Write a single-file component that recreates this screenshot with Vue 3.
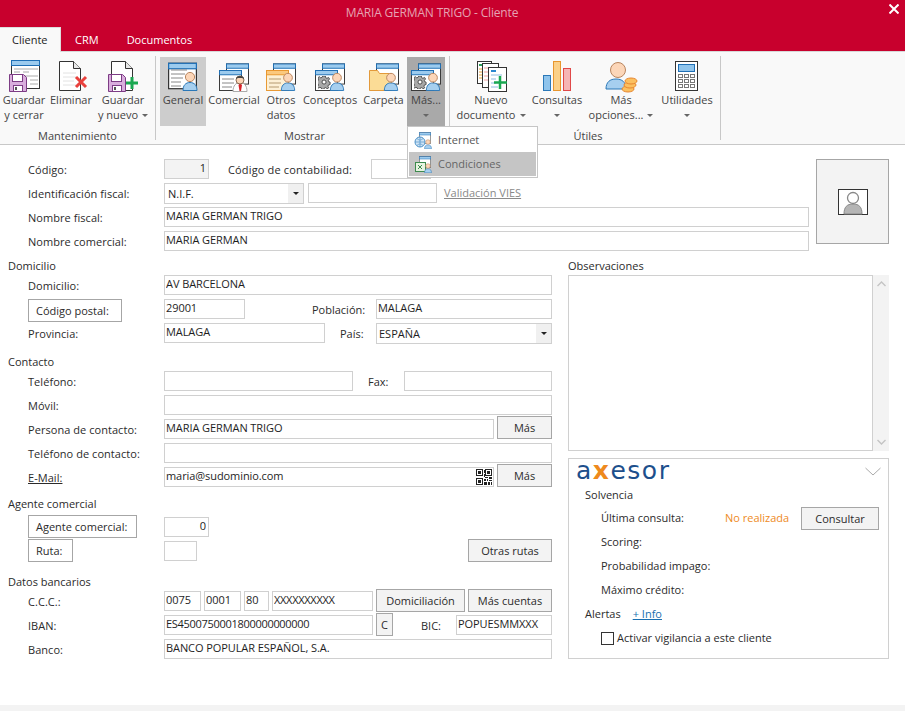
<template>
  <div class="win">
    <svg class="defs" width="0" height="0">
      <defs>
        <symbol id="person" viewBox="0 0 16 20">
          <path d="M1 19.500c0-5 2.500-8 7-8s7 3 7 8z" fill="#a6cfef" stroke="#2b78b8" />
          <circle cx="8" cy="6" r="4.600" fill="#fcd6b8" stroke="#b9855e" />
        </symbol>
        <symbol id="gear" viewBox="0 0 14 14">
          <path d="M5.500 0h3l.4 2 1.500.7 1.800-1.100 1.200 1.900-1.400 1.400.3 1.600 1.700.6v2.800l-1.900.5-.6 1.500 1 1.700-2 1.200-1.400-1.400-1.600.3-.6 1.700h-2.600l-.6-1.800-1.500-.5-1.700 1-1.300-2 1.300-1.300-.4-1.700-1.800-.5v-2.800l1.900-.5.5-1.600-1-1.700 2-1.200 1.400 1.300 1.500-.4z" fill="#a8a8a8" stroke="#444" transform="scale(.93)" />
          <circle cx="6.500" cy="6.500" r="2.200" fill="#fff" stroke="#444" />
        </symbol>
        <symbol id="floppy" viewBox="0 0 18 18">
          <path d="M.5.500h14l3 3v14h-17z" fill="#d9aedd" stroke="#7d3d85" />
          <rect x="3.500" y=".5" width="10" height="7" fill="#fff" stroke="#7d3d85" />
          <rect x="4.500" y="11.500" width="9" height="6" fill="#fff" stroke="#7d3d85" />
          <rect x="6" y="13" width="2" height="3" fill="#555" />
        </symbol>
        <symbol id="doc" viewBox="0 0 22 30">
          <path d="M.5.500h14l7 7v22h-21z" fill="#fff" stroke="#333" />
          <path d="M14.500.500v7h7" fill="#e8e8e8" stroke="#333" />
        </symbol>
        <symbol id="win" viewBox="0 0 24 22">
          <rect x=".5" y=".5" width="23" height="21" fill="#fff" stroke="#333" />
          <rect x=".5" y=".5" width="23" height="4.500" fill="#9ccbee" stroke="#1f6fb5" />
        </symbol>
        <symbol id="winOrange" viewBox="0 0 24 22">
          <rect x=".5" y=".5" width="23" height="21" fill="#fdf0d5" stroke="#e8962e" />
          <rect x=".5" y=".5" width="23" height="4.500" fill="#fbc97e" stroke="#e8962e" />
        </symbol>

        <symbol id="i-guardar" viewBox="0 0 36 36">
          <rect x="5.500" y="2.500" width="28" height="28" fill="#fff" stroke="#333" />
          <rect x="5.500" y="2.500" width="28" height="5" fill="#9ccbee" stroke="#1f6fb5" />
          <path d="M8 11h24M8 14h6M17 14h6M8 18h24M24 22h8M24 26h8" stroke="#aaa" fill="none" />
          <use href="#floppy" x="3" y="16" width="18" height="18" />
        </symbol>
        <symbol id="i-eliminar" viewBox="0 0 36 36">
          <use href="#doc" x="6" y="3" width="22" height="30" />
          <path d="M10 15h13M10 19h13M10 23h11M10 27h13" stroke="#e2e2e2" fill="none" />
          <path d="M23 19l10 10M33 19l-10 10" stroke="#e8403c" stroke-width="3" fill="none" />
        </symbol>
        <symbol id="i-nuevo" viewBox="0 0 36 36">
          <use href="#doc" x="6" y="3" width="22" height="30" />
          <use href="#floppy" x="3" y="16" width="18" height="18" />
          <path d="M27 19v12M21 25h12" stroke="#1aa851" stroke-width="3" fill="none" />
        </symbol>
        <symbol id="i-general" viewBox="0 0 36 36">
          <use href="#win" x="3" y="4" width="29" height="28" />
          <path d="M6 12h16M6 16h14M6 20h12M6 24h10M6 28h10" stroke="#888" fill="none" />
          <use href="#person" x="17" y="13" width="16" height="20" />
        </symbol>
        <symbol id="i-comercial" viewBox="0 0 36 36">
          <use href="#win" x="10" y="3" width="23" height="26" />
          <use href="#win" x="3" y="12" width="23" height="21" />
          <path d="M6 21h12M6 25h12M6 29h10" stroke="#888" fill="none" />
          <path d="M17 33.500c0-6 3-9 7-9s7 3 7 9z" fill="#fff" stroke="#aaa" />
          <path d="M24 25l-1.500 2 1 6h1.500l1-6z" fill="#d8232a" />
          <circle cx="24" cy="22" r="4" fill="#fcd6b8" stroke="#8a6a50" />
          <path d="M20 21c0-4 8-4 8 0l-2-1h-4z" fill="#444" />
        </symbol>
        <symbol id="i-otros" viewBox="0 0 36 36">
          <use href="#win" x="10" y="3" width="23" height="26" />
          <use href="#winOrange" x="3" y="12" width="23" height="21" />
          <path d="M6 21h12M6 25h12M6 29h10" stroke="#b59a70" fill="none" />
          <use href="#person" x="17" y="14" width="16" height="19" />
        </symbol>
        <symbol id="i-conceptos" viewBox="0 0 36 36">
          <use href="#win" x="10" y="3" width="23" height="26" />
          <use href="#win" x="3" y="12" width="23" height="21" />
          <use href="#gear" x="6" y="18" width="13" height="13" />
          <use href="#person" x="17" y="14" width="16" height="19" />
        </symbol>
        <symbol id="i-carpeta" viewBox="0 0 36 36">
          <use href="#win" x="10" y="3" width="23" height="26" />
          <path d="M3.500 32.500v-20h8l2 3h12v17z" fill="#fbdc96" stroke="#e39a3b" />
          <use href="#person" x="17" y="14" width="16" height="19" />
        </symbol>
        <symbol id="i-documento" viewBox="0 0 36 36">
          <rect x="4.500" y="3.500" width="14" height="22" fill="#fff" stroke="#333" />
          <path d="M6 7h9" stroke="#2a9d5a" stroke-width="2" />
          <path d="M6 11h10M6 14h10M6 17h10M6 20h10" stroke="#e8a33a" />
          <rect x="9.500" y="5.500" width="16" height="24" fill="#fff" stroke="#333" />
          <path d="M11 10h10M11 14h12M11 18h12M11 22h12" stroke="#f0a0a0" />
          <rect x="15.500" y="9.500" width="18" height="24" fill="#fff" stroke="#333" />
          <path d="M18 13h5" stroke="#2b88d0" stroke-width="2" />
          <path d="M18 17h11M18 21h5M18 25h5M18 29h7" stroke="#8fbce0" />
          <path d="M27 18v13M21 24.500h13" stroke="#1aa851" stroke-width="2.500" fill="none" />
        </symbol>
        <symbol id="i-consultas" viewBox="0 0 36 36">
          <rect x="4.500" y="17.500" width="7" height="15" fill="#8fc4ec" stroke="#2b78b8" />
          <rect x="14.500" y="3.500" width="7" height="29" fill="#fbd088" stroke="#e8962e" />
          <rect x="24.500" y="10.500" width="7" height="22" fill="#f5b5b5" stroke="#e04848" />
        </symbol>
        <symbol id="i-opciones" viewBox="0 0 36 36">
          <path d="M3 31c0-7 4-10 10-10s10 3 10 10z" fill="#a6cfef" stroke="#2b78b8" />
          <circle cx="15" cy="12" r="7.500" fill="#fcd6b8" stroke="#b9855e" />
          <g fill="#fbc060" stroke="#e8862e">
            <ellipse cx="25" cy="31" rx="6" ry="3" />
            <ellipse cx="27" cy="27" rx="6" ry="3" />
            <ellipse cx="28" cy="23" rx="6" ry="3" />
          </g>
        </symbol>
        <symbol id="i-utilidades" viewBox="0 0 36 36">
          <rect x="6.500" y="3.500" width="22" height="29" fill="#fff" stroke="#333" />
          <rect x="9.500" y="6.500" width="16" height="7" fill="#8fc4ec" stroke="#1f6fb5" />
          <g fill="none" stroke="#777">
            <rect x="9.500" y="16.500" width="4" height="3" /><rect x="15.500" y="16.500" width="4" height="3" /><rect x="21.500" y="16.500" width="4" height="3" />
            <rect x="9.500" y="21.500" width="4" height="3" /><rect x="15.500" y="21.500" width="4" height="3" /><rect x="21.500" y="21.500" width="4" height="3" />
            <rect x="9.500" y="26.500" width="4" height="3" /><rect x="15.500" y="26.500" width="4" height="3" /><rect x="21.500" y="26.500" width="4" height="3" />
          </g>
        </symbol>
      </defs>
    </svg>

    <header class="titlebar">
      <span class="title">MARIA GERMAN TRIGO - Cliente</span>
      <svg class="close" width="10" height="10" viewBox="0 0 10 10">
        <path d="M.5.500l9 9M9.500.500l-9 9" stroke="#fff" stroke-width="2" />
      </svg>
    </header>

    <nav class="tabs">
      <span class="tab tab-on">Cliente</span>
      <span class="tab tab-crm">CRM</span>
      <span class="tab">Documentos</span>
    </nav>

    <section class="ribbon">
      <div v-for="g in groups" :key="g.name" class="group" :class="g.cls">
        <div class="group-btns">
          <div
            v-for="b in g.items"
            :key="b.icon + b.lines[0]"
            class="rbtn"
            :class="b.state"
            :style="{ width: b.w + 'px' }"
          >
            <svg class="ricon" width="36" height="36"><use :href="'#' + b.icon" /></svg>
            <span class="rline">{{ b.lines[0] }}</span>
            <span class="rline">
              {{ b.lines[1] }}<i v-if="b.arrow" class="caret" :class="{ solo: !b.lines[1] }"></i>
            </span>
          </div>
        </div>
        <div class="group-name">{{ g.name }}</div>
      </div>
    </section>

    <div class="menu">
      <div class="menu-item">
        <svg width="18" height="18" viewBox="0 0 18 18">
          <use href="#win" x="5" y="1" width="12" height="12" />
          <circle cx="6" cy="11" r="5" fill="#cfe4f5" stroke="#4f93c9" />
          <path d="M1 11h10M6 6v10M3 7.500c2 2 4 2 6 0M3 14.500c2-2 4-2 6 0" stroke="#4f93c9" fill="none" stroke-width=".7" />
          <use href="#person" x="10" y="8" width="8" height="10" />
        </svg>
        <span>Internet</span>
      </div>
      <div class="menu-item menu-on">
        <svg width="18" height="18" viewBox="0 0 18 18">
          <use href="#win" x="5" y="1" width="12" height="12" />
          <rect x="1.500" y="7.500" width="10" height="9" fill="#e6f3e0" stroke="#3d8a4e" />
          <path d="M4 10l4 4M8 10l-4 4" stroke="#3d8a4e" />
          <use href="#person" x="10" y="8" width="8" height="10" />
        </svg>
        <span>Condiciones</span>
      </div>
    </div>

    <main class="body">
      <div class="top">
        <div class="top-rows">
          <div class="row">
            <label class="lab">Código:</label>
            <input class="f f-num f-off w45" value="1" readonly />
            <label class="lab-inline cont">Código de contabilidad:</label>
            <input class="f w60 cont-in" readonly />
          </div>
          <div class="row">
            <label class="lab">Identificación fiscal:</label>
            <div class="combo w140 pad4"><span>N.I.F.</span><i class="combo-btn"><b class="caret dark"></b></i></div>
            <input class="f w129 ml4" readonly />
            <a class="vies">Validación VIES</a>
          </div>
          <div class="row">
            <label class="lab">Nombre fiscal:</label>
            <input class="f grow" value="MARIA GERMAN TRIGO" readonly />
          </div>
          <div class="row">
            <label class="lab">Nombre comercial:</label>
            <input class="f grow" value="MARIA GERMAN" readonly />
          </div>
        </div>
        <div class="photo">
          <svg width="30" height="26" viewBox="0 0 30 26">
            <rect x=".5" y=".5" width="29" height="25" fill="#fff" stroke="#333" />
            <path d="M6 25c0-7 3-10 9-10s9 3 9 10z" fill="#b5b5b5" stroke="#888" />
            <circle cx="15" cy="9" r="5.500" fill="#fff" stroke="#888" stroke-width="1.300" />
          </svg>
        </div>
      </div>

      <div class="cols">
        <div class="left">
          <h3 class="head h-dom">Domicilio</h3>
          <div class="row">
            <label class="lab">Domicilio:</label>
            <input class="f grow" value="AV BARCELONA" readonly />
          </div>
          <div class="row">
            <button class="btn lab-btn b-postal">Código postal:</button>
            <input class="f w81" value="29001" readonly />
            <label class="lab-inline pob">Población:</label>
            <input class="f grow" value="MALAGA" readonly />
          </div>
          <div class="row">
            <label class="lab">Provincia:</label>
            <input class="f w161" value="MALAGA" readonly />
            <label class="lab-inline pais">País:</label>
            <div class="combo grow"><span>ESPAÑA</span><i class="combo-btn"><b class="caret dark"></b></i></div>
          </div>

          <h3 class="head h-con">Contacto</h3>
          <div class="row">
            <label class="lab">Teléfono:</label>
            <input class="f w189" readonly />
            <label class="lab-inline fax">Fax:</label>
            <input class="f grow" readonly />
          </div>
          <div class="row">
            <label class="lab">Móvil:</label>
            <input class="f grow" readonly />
          </div>
          <div class="row">
            <label class="lab">Persona de contacto:</label>
            <input class="f grow" value="MARIA GERMAN TRIGO" readonly />
            <button class="btn b-mas">Más</button>
          </div>
          <div class="row">
            <label class="lab">Teléfono de contacto:</label>
            <input class="f grow" readonly />
          </div>
          <div class="row">
            <label class="lab"><u>E-Mail:</u></label>
            <div class="mail grow">
              <input class="f grow" value="maria@sudominio.com" readonly />
              <svg class="qr" width="16" height="16" viewBox="0 0 16 16">
                <path fill="#222" fill-rule="evenodd" d="M0 0h7v7H0zM1 1v5h5V1zM2 2h3v3H2zM9 0h7v7H9zM10 1v5h5V1zM11 2h3v3h-3zM0 9h7v7H0zM1 10v5h5v-5zM2 11h3v3H2zM8 1h1v3H8zM8 5h1v3H8zM9 8h3v1H9zM13 8h3v2h-3zM8 10h2v2H8zM11 10h1v2h-1zM13 11h3v1h-3zM8 13h3v3H8zM12 13h2v3h-2zM15 13h1v3h-1z" />
              </svg>
            </div>
            <button class="btn b-mas">Más</button>
          </div>

          <h3 class="head h-age">Agente comercial</h3>
          <div class="row">
            <button class="btn lab-btn b-agente">Agente comercial:</button>
            <input class="f f-num w45" value="0" readonly />
          </div>
          <div class="row">
            <button class="btn lab-btn b-ruta">Ruta:</button>
            <input class="f w33" readonly />
            <button class="btn b-otras">Otras rutas</button>
          </div>

          <h3 class="head h-ban">Datos bancarios</h3>
          <div class="row">
            <label class="lab">C.C.C.:</label>
            <input class="f w37" value="0075" readonly />
            <input class="f w37 ml3" value="0001" readonly />
            <input class="f w25 ml3" value="80" readonly />
            <input class="f w101 ml3 tight" value="XXXXXXXXXX" readonly />
            <button class="btn b-dom">Domiciliación</button>
            <button class="btn b-cuentas">Más cuentas</button>
          </div>
          <div class="row">
            <label class="lab">IBAN:</label>
            <input class="f w209 tight" value="ES4500750001800000000000" readonly />
            <button class="btn b-c">C</button>
            <label class="lab-inline bic">BIC:</label>
            <input class="f grow" value="POPUESMMXXX" readonly />
          </div>
          <div class="row">
            <label class="lab">Banco:</label>
            <input class="f grow" value="BANCO POPULAR ESPAÑOL, S.A." readonly />
          </div>
        </div>

        <aside class="right">
          <h3 class="head h-dom">Observaciones</h3>
          <div class="obs">
            <div class="obs-text"></div>
            <div class="scroll">
              <svg width="9" height="6" viewBox="0 0 9 6"><path d="M.5 5l4-4 4 4" fill="none" stroke="#c4c4c4" stroke-width="1.400" /></svg>
              <svg width="9" height="6" viewBox="0 0 9 6"><path d="M.5 1l4 4 4-4" fill="none" stroke="#c4c4c4" stroke-width="1.400" /></svg>
            </div>
          </div>
          <div class="axe">
            <div class="axe-top">
              <span class="logo">a<em>x</em>esor</span>
              <svg class="axe-fold" width="16" height="9" viewBox="0 0 16 9"><path d="M.5 1l7.500 7 7.500-7" fill="none" stroke="#aaa" /></svg>
            </div>
            <div class="axe-head">Solvencia</div>
            <div class="axe-row">
              <span class="axe-lab">Última consulta:</span>
              <span class="warn">No realizada</span>
              <button class="btn b-consultar">Consultar</button>
            </div>
            <div class="axe-row"><span class="axe-lab">Scoring:</span></div>
            <div class="axe-row"><span class="axe-lab">Probabilidad impago:</span></div>
            <div class="axe-row"><span class="axe-lab">Máximo crédito:</span></div>
            <div class="axe-alert"><span>Alertas</span><a class="info">+ Info</a></div>
            <div class="axe-check"><i class="check"></i><span>Activar vigilancia a este cliente</span></div>
          </div>
        </aside>
      </div>
    </main>
    <footer class="strip"></footer>
  </div>
</template>

<script setup>
// contenido de la cinta, anchos medidos del original
const groups = [
  {
    name: 'Mantenimiento',
    cls: 'g1',
    items: [
      { icon: 'i-guardar', lines: ['Guardar', 'y cerrar'], w: 48 },
      { icon: 'i-eliminar', lines: ['Eliminar', ''], w: 46 },
      { icon: 'i-nuevo', lines: ['Guardar', 'y nuevo'], w: 58, arrow: true },
    ],
  },
  {
    name: 'Mostrar',
    cls: 'g2',
    items: [
      { icon: 'i-general', lines: ['General', ''], w: 46, state: 'on' },
      { icon: 'i-comercial', lines: ['Comercial', ''], w: 56 },
      { icon: 'i-otros', lines: ['Otros', 'datos'], w: 38 },
      { icon: 'i-conceptos', lines: ['Conceptos', ''], w: 60 },
      { icon: 'i-carpeta', lines: ['Carpeta', ''], w: 47 },
      { icon: 'i-conceptos', lines: ['Más...', ''], w: 38, state: 'open', arrow: true },
    ],
  },
  {
    name: 'Útiles',
    cls: 'g3',
    items: [
      { icon: 'i-documento', lines: ['Nuevo', 'documento'], w: 70, arrow: true },
      { icon: 'i-consultas', lines: ['Consultas', ''], w: 62, arrow: true },
      { icon: 'i-opciones', lines: ['Más', 'opciones...'], w: 66, arrow: true },
      { icon: 'i-utilidades', lines: ['Utilidades', ''], w: 66, arrow: true },
    ],
  },
]
</script>

<style>
html,
body {
  margin: 0;
  background: #fff;
}
</style>

<style scoped>
.win {
  position: relative;
  width: 905px;
  height: 711px;
  overflow: hidden;
  background: #fff;
  font: 11px/16px "Open Sans", sans-serif;
  color: #2b2b2b;
}
.defs {
  position: absolute;
}
.titlebar {
  position: relative;
  height: 27px;
  background: #c8002d;
  text-align: center;
}
.title {
  display: block;
  padding-top: 5px;
  margin-right: 41px;
  font-size: 12px;
  letter-spacing: -0.18px;
  color: #e6a3b3;
}
.close {
  position: absolute;
  top: 4px;
  right: 6px;
}
.tabs {
  display: flex;
  height: 24px;
  background: #c8002d;
}
.tab {
  padding-top: 5px;
  margin-left: 28px;
  color: #fff;
}
.tab-on {
  position: relative;
  z-index: 1;
  width: 61px;
  height: 25px;
  margin: 0;
  box-sizing: border-box;
  padding: 4px 0 0 12px;
  background: #f9f9f9;
  border-top: 1px solid #ddd;
  border-right: 1px solid #ddd;
  color: #222;
}
.tab-crm {
  margin-left: 14px;
}
.ribbon {
  display: flex;
  height: 94px;
  box-sizing: border-box;
  padding-top: 4px;
  background: #f9f9f9;
  border-top: 1px solid #d8d8d8;
  border-bottom: 1px solid #c8c8c8;
}
.group {
  position: relative;
  box-sizing: border-box;
  height: 84px;
  border-right: 1px solid #c8c8c8;
}
.group-btns {
  display: flex;
  margin-top: 1px;
}
.g1 {
  width: 156px;
}
.g2 {
  width: 294px;
  padding-left: 4px;
}
.g3 {
  width: 271px;
  padding-left: 6px;
}
.rbtn {
  display: flex;
  flex-direction: column;
  align-items: center;
  height: 69px;
  box-sizing: border-box;
  padding-top: 1px;
  color: #444;
}
.rbtn.on {
  background: #cdcdcd;
}
.rbtn.open {
  background: #a9a9a9;
}
.ricon {
  flex: none;
  margin-bottom: -2px;
}
.rline {
  height: 15px;
  line-height: 15px;
  white-space: nowrap;
}
.caret {
  display: inline-block;
  width: 0;
  height: 0;
  margin-left: 4px;
  vertical-align: 2px;
  border-left: 3px solid transparent;
  border-right: 3px solid transparent;
  border-top: 3px solid #666;
}
.caret.solo {
  margin-left: 0;
}
.caret.dark {
  margin: 0;
  border-top-color: #222;
}
.group-name {
  margin-top: 2px;
  line-height: 16px;
  text-align: center;
  color: #444;
}
.menu {
  position: absolute;
  top: 126px;
  left: 407px;
  z-index: 3;
  width: 131px;
  height: 52px;
  box-sizing: border-box;
  padding: 1px;
  background: #fff;
  border: 1px solid #c6c6c6;
}
.menu-item {
  display: flex;
  align-items: center;
  gap: 6px;
  height: 24px;
  padding-left: 5px;
  color: #555;
}
.menu-on {
  background: #c5c5c5;
  color: #666;
}
.body {
  height: 560px;
}
.top {
  display: flex;
  padding-top: 12px;
}
.top-rows {
  width: 809px;
}
.photo {
  display: flex;
  align-items: center;
  justify-content: center;
  width: 73px;
  height: 85px;
  box-sizing: border-box;
  margin: 2px 0 0 7px;
  background: #f3f3f3;
  border: 1px solid #a6a6a6;
}
.row {
  display: flex;
  align-items: center;
  height: 24px;
}
.lab {
  flex: none;
  width: 136px;
  margin: 2px 0 0 28px;
  letter-spacing: 0.05px;
  white-space: nowrap;
}
.lab-inline {
  flex: none;
  margin-top: 2px;
  white-space: nowrap;
}
.f {
  flex: none;
  min-width: 0;
  height: 20px;
  box-sizing: border-box;
  padding: 0 1px 4px;
  margin: 0;
  border: 1px solid #d0d0d0;
  outline: none;
  background: #fff;
  font: 11px/14px "Open Sans", sans-serif;
  letter-spacing: -0.08px;
  color: #1e1e1e;
}
.tight {
  letter-spacing: -0.3px;
}
.grow {
  flex: 1;
}
.f-num {
  padding-right: 2px;
  text-align: right;
}
.f-off {
  background: #f3f3f3;
}
.w45 {
  width: 45px;
}
.w60 {
  width: 60px;
}
.w129 {
  width: 129px;
}
.w140 {
  width: 140px;
}
.w81 {
  width: 81px;
}
.w161 {
  width: 161px;
}
.w189 {
  width: 189px;
}
.w33 {
  width: 33px;
}
.w37 {
  width: 37px;
}
.w25 {
  width: 25px;
}
.w101 {
  width: 101px;
}
.w209 {
  width: 209px;
}
.ml3 {
  margin-left: 3px;
}
.ml4 {
  margin-left: 4px;
}
.cont {
  margin-left: 19px;
  letter-spacing: 0.16px;
}
.cont-in {
  margin-left: 19px;
}
.pob {
  width: 64px;
  margin-left: 67px;
}
.pais {
  width: 36px;
  margin-left: 15px;
}
.fax {
  width: 36px;
  margin-left: 15px;
}
.bic {
  width: 35px;
  margin-left: 28px;
}
.vies {
  margin-left: 7px;
  color: #8a8a8a;
  text-decoration: underline;
}
.combo {
  display: flex;
  align-items: center;
  justify-content: space-between;
  align-self: flex-start;
  height: 21px;
  box-sizing: border-box;
  margin-top: 2px;
  padding-left: 2px;
  border: 1px solid #d0d0d0;
  color: #1e1e1e;
}
.pad4 {
  padding-left: 3px;
}
.combo-btn {
  display: flex;
  align-items: center;
  justify-content: center;
  width: 15px;
  height: 100%;
  background: #f0f0f0;
}
.btn {
  flex: none;
  align-self: flex-start;
  height: 23px;
  box-sizing: border-box;
  padding: 0;
  margin: 0;
  background: #f3f3f3;
  border: 1px solid #a6a6a6;
  border-radius: 0;
  font: 11px "Open Sans", sans-serif;
  color: #2b2b2b;
}
.lab-btn {
  margin-left: 28px;
  padding-left: 7px;
  background: #fff;
  text-align: left;
}
.b-postal {
  width: 94px;
  margin: 2px 42px 0 28px;
}
.b-agente {
  width: 109px;
  margin-right: 27px;
}
.b-ruta {
  width: 45px;
  margin-right: 91px;
}
.b-mas {
  width: 55px;
  margin: -1px 0 0 3px;
}
.b-otras {
  width: 84px;
  margin-left: auto;
}
.b-dom {
  width: 89px;
  margin-left: 3px;
}
.b-cuentas {
  width: 84px;
  margin-left: 3px;
}
.b-c {
  width: 17px;
  margin-left: 3px;
}
.b-consultar {
  width: 78px;
  margin: 1px 0 0 auto;
}
.mail {
  position: relative;
  display: flex;
}
.qr {
  position: absolute;
  top: 2px;
  right: 2px;
}
.cols {
  display: flex;
  gap: 16px;
}
.left {
  width: 552px;
}
.right {
  width: 321px;
}
.head {
  height: 16px;
  margin: 0 0 0 8px;
  font-size: 11px;
  font-weight: 400;
  line-height: 18px;
  color: #2b2b2b;
}
.right .head {
  margin-left: 0;
}
.h-dom {
  margin-top: 4px;
}
.h-con {
  margin-top: 8px;
}
.h-age {
  margin-top: 6px;
  margin-bottom: 4px;
}
.h-ban {
  margin-top: 10px;
}
.obs {
  display: flex;
  height: 176px;
  margin-top: 2px;
}
.obs-text {
  flex: 1;
  border: 1px solid #d0d0d0;
}
.scroll {
  display: flex;
  flex-direction: column;
  align-items: center;
  justify-content: space-between;
  width: 16px;
  box-sizing: border-box;
  padding: 6px 0;
  background: #f3f3f3;
}
.axe {
  height: 201px;
  box-sizing: border-box;
  margin-top: 7px;
  padding: 0 9px 0 16px;
  border: 1px solid #d0d0d0;
}
.axe-top {
  display: flex;
  align-items: center;
  justify-content: space-between;
  height: 24px;
  margin-left: -9px;
}
.axe-fold {
  margin-right: -2px;
}
.logo {
  font: 400 25px/24px "DejaVu Sans", sans-serif;
  letter-spacing: 1.500px;
  color: #1d4f8c;
}
.logo em {
  font-style: normal;
  font-weight: 700;
  color: #ee8a1d;
}
.axe-head {
  height: 23px;
  padding-top: 2px;
  box-sizing: border-box;
  line-height: 20px;
}
.axe-row {
  display: flex;
  align-items: center;
  height: 24px;
  padding-left: 16px;
}
.axe-lab {
  width: 124px;
}
.warn {
  color: #ee8a1d;
}
.axe-alert {
  display: flex;
  align-items: center;
  gap: 12px;
  height: 24px;
}
.info {
  color: #1a6fb0;
  text-decoration: underline;
}
.axe-check {
  display: flex;
  align-items: center;
  gap: 3px;
  height: 24px;
  padding-left: 16px;
}
.check {
  width: 13px;
  height: 13px;
  box-sizing: border-box;
  border: 1px solid #333;
}
.strip {
  height: 6px;
  background: #f3f3f3;
}
</style>
